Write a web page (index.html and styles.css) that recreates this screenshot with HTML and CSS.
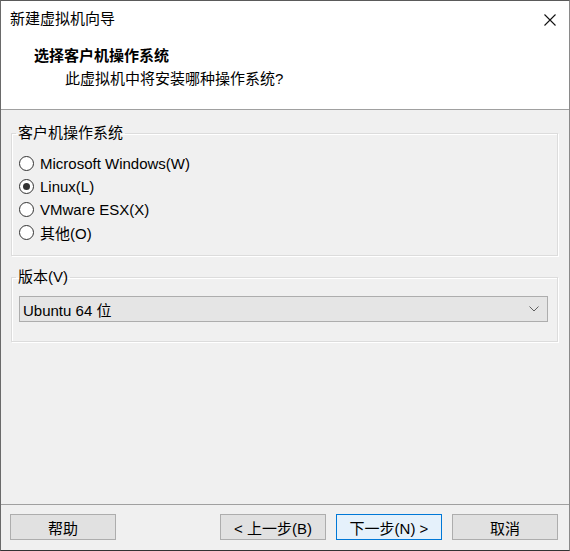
FILE: index.html
```html
<!DOCTYPE html>
<html lang="zh-CN">
<head>
<meta charset="utf-8">
<title>新建虚拟机向导</title>
<link rel="stylesheet" href="styles.css">
</head>
<body>
<div class="window">
  <div class="header">
    <div class="titlebar">
      <span class="title">新建虚拟机向导</span>
      <span class="close">
        <svg width="12" height="12" viewBox="0 0 12 12"><path d="M0.5 0.5 L11.5 11.5 M11.5 0.5 L0.5 11.5" stroke="#111" stroke-width="1.1" fill="none"/></svg>
      </span>
    </div>
    <div class="heading">选择客户机操作系统</div>
    <div class="subheading">此虚拟机中将安装哪种操作系统?</div>
  </div>
  <div class="body">
    <fieldset class="group group-os">
      <legend>客户机操作系统</legend>
      <div class="radio-row"><span class="radio"></span><span class="rlabel">Microsoft Windows(W)</span></div>
      <div class="radio-row"><span class="radio checked"></span><span class="rlabel">Linux(L)</span></div>
      <div class="radio-row"><span class="radio"></span><span class="rlabel">VMware ESX(X)</span></div>
      <div class="radio-row"><span class="radio"></span><span class="rlabel">其他(O)</span></div>
    </fieldset>
    <fieldset class="group group-ver">
      <legend>版本(V)</legend>
      <div class="select">
        <span class="select-text">Ubuntu 64 位</span>
        <svg class="chev" width="10" height="6" viewBox="0 0 10 6"><path d="M0.5 0.5 L5 5 L9.5 0.5" stroke="#606060" stroke-width="1" fill="none"/></svg>
      </div>
    </fieldset>
  </div>
  <div class="footer">
    <button class="btn">帮助</button>
    <div class="spacer"></div>
    <button class="btn">&lt; 上一步(B)</button>
    <button class="btn default">下一步(N) &gt;</button>
    <button class="btn">取消</button>
  </div>
</div>
</body>
</html>
```
FILE: styles.css
```css
html, body {
  margin: 0;
  padding: 0;
  background: #f0f0f0;
}
body {
  font-family: "Liberation Sans", "Noto Sans CJK SC", sans-serif;
  font-size: 15px;
  color: #000;
}
.window {
  width: 570px;
  height: 551px;
  box-sizing: border-box;
  border: 1px solid #6a6a6a;
  border-top-color: #5a5a5a;
  border-right-color: #8a8a8a;
  border-bottom-color: #333;
  display: flex;
  flex-direction: column;
  background: #f0f0f0;
}
.header {
  height: 108px;
  background: #fff;
  border-bottom: 1px solid #a0a0a0;
  flex: none;
}
.titlebar {
  height: 36px;
  display: flex;
  align-items: center;
  justify-content: space-between;
  padding: 0 13px 0 9px;
}
.title {
  line-height: 36px;
}
.close {
  display: flex;
  align-items: center;
  margin-top: 1px;
}
.heading {
  margin-top: 8px;
  line-height: 22px;
  padding-left: 33px;
  font-weight: bold;
}
.subheading {
  line-height: 24px;
  padding-left: 64px;
}
.body {
  height: 394px;
  flex: none;
  padding: 13px 11px 0 10px;
  box-sizing: border-box;
}
.group {
  margin: 0;
  border: 1px solid #dcdcdc;
  box-shadow: inset 1px 1px 0 #fff, 1px 1px 0 #fff;
  min-width: 0;
}
.group legend {
  padding: 0 2px;
  margin-left: -3px;
  line-height: 20px;
}
.group-os {
  padding: 9px 9px 11px 7px;
}
.radio-row {
  height: 23px;
  display: flex;
  align-items: center;
}
.radio {
  width: 15px;
  height: 15px;
  box-sizing: border-box;
  border: 1px solid #333;
  border-radius: 50%;
  background: #fff;
  display: flex;
  align-items: center;
  justify-content: center;
  flex: none;
}
.radio.checked::after {
  content: "";
  width: 7px;
  height: 7px;
  border-radius: 50%;
  background: #333;
}
.rlabel {
  margin-left: 6px;
}
.group-ver {
  margin-top: 11px;
  padding: 9px 9px 19px 7px;
}
.select {
  height: 26px;
  box-sizing: border-box;
  border: 1px solid #adadad;
  background: #e5e5e5;
  display: flex;
  align-items: center;
  justify-content: space-between;
  padding: 0 8px 0 3px;
}
.chev {
  display: block;
}
.footer {
  flex: 1;
  border-top: 1px solid #a0a0a0;
  display: flex;
  align-items: flex-start;
  padding: 9px 11px 0 9px;
  gap: 10px;
}
.spacer {
  flex: 1;
}
.btn {
  width: 106px;
  height: 26px;
  box-sizing: border-box;
  border: 1px solid #adadad;
  background: #e1e1e1;
  font-family: inherit;
  font-size: 15px;
  color: #000;
  padding: 0;
  margin: 0;
}
.btn.default {
  border-color: #0078d7;
  background: #e5f1fb;
}
```
